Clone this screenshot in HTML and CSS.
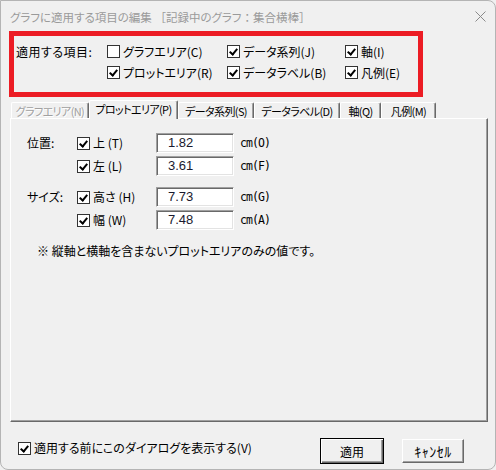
FILE: index.html
```html
<!DOCTYPE html>
<html lang="ja">
<head>
    <meta charset="UTF-8">
    <title>グラフに適用する項目の編集</title>
    <link rel="stylesheet" href="styles.css">
</head>
<body>
    <div class="window">
        <!-- Title bar -->
        <div class="titlebar">
            <span class="title">グラフに適用する項目の編集 <span class="wide">［</span>記録中のグラフ<span class="wide">：</span>集合横棒<span class="wide">］</span></span>
            <svg class="close" width="11" height="11" viewBox="0 0 11 11">
                <path d="M0.5 0.5 L10.5 10.5 M10.5 0.5 L0.5 10.5" stroke="#8a8a8a" stroke-width="1" fill="none"/>
            </svg>
        </div>

        <!-- Items to apply -->
        <div class="apply-group">
            <div class="apply-label">適用する項目:</div>
            <div class="check"><span class="box"></span>グラフエリア(C)</div>
            <div class="check"><span class="box on"></span>データ系列(J)</div>
            <div class="check"><span class="box on"></span>軸(I)</div>
            <div class="check first-col"><span class="box on"></span>プロットエリア(R)</div>
            <div class="check"><span class="box on"></span>データラベル(B)</div>
            <div class="check"><span class="box on"></span>凡例(E)</div>
        </div>

        <!-- Tabs -->
        <div class="tabs">
            <div class="tab disabled" style="width: 78px;">グラフエリア(N)</div>
            <div class="tab active" style="width: 89px;">プロットエリア(P)</div>
            <div class="tab" style="width: 76px;">データ系列(S)</div>
            <div class="tab" style="width: 86px;">データラベル(D)</div>
            <div class="tab" style="width: 41px;">軸(Q)</div>
            <div class="tab" style="width: 55px;">凡例(M)</div>
        </div>

        <div class="panel">
            <div class="field-group">
                <div class="field-row">
                    <div class="field-label">位置:</div>
                    <div class="field-check"><span class="box on"></span>上 (T)</div>
                    <div class="field-input">1.82</div>
                    <div class="unit">cm(O)</div>
                </div>
                <div class="field-row">
                    <div class="field-label"></div>
                    <div class="field-check"><span class="box on"></span>左 (L)</div>
                    <div class="field-input">3.61</div>
                    <div class="unit">cm(F)</div>
                </div>
            </div>
            <div class="field-group">
                <div class="field-row">
                    <div class="field-label">サイズ:</div>
                    <div class="field-check"><span class="box on"></span>高さ (H)</div>
                    <div class="field-input">7.73</div>
                    <div class="unit">cm(G)</div>
                </div>
                <div class="field-row">
                    <div class="field-label"></div>
                    <div class="field-check"><span class="box on"></span>幅 (W)</div>
                    <div class="field-input">7.48</div>
                    <div class="unit">cm(A)</div>
                </div>
            </div>
            <p class="note">※ 縦軸と横軸を含まないプロットエリアのみの値です。</p>
        </div>

        <!-- Footer -->
        <div class="footer">
            <div class="check footer-check"><span class="box on"></span>適用する前にこのダイアログを表示する(V)</div>
            <button class="btn btn-default">適用</button>
            <button class="btn btn-cancel">ｷｬﾝｾﾙ</button>
        </div>
    </div>
</body>
</html>
```

FILE: styles.css
```css
* {
    margin: 0;
    padding: 0;
    box-sizing: border-box;
}

body {
    width: 496px;
    height: 470px;
    overflow: hidden;
    background: #f0f0f0;
    font-family: "Noto Sans CJK JP", "Liberation Sans", sans-serif;
    font-size: 12px;
    line-height: 14px;
    color: #000;
    font-feature-settings: "palt";
}

/* Window frame */
.window {
    width: 496px;
    height: 470px;
    border: 1px solid #b4b4b4;
    border-radius: 0 8px 8px 8px;
    background: #f0f0f0;
}

.titlebar {
    height: 29px;
    display: flex;
    align-items: center;
    padding: 3px 9px 0 9px;
    color: #9a9a9a;
}

.title {
    flex: 1;
    font-size: 11.5px;
    white-space: nowrap;
}

.title .wide {
    font-feature-settings: normal;
}

.close {
    margin-top: -2px;
}

/* Items to apply (red box) */
.apply-group {
    margin: 1px 0 0 8px;
    width: 414px;
    height: 66px;
    border: 5px solid #ec1c24;
    padding: 5px 0 0 2px;
    display: grid;
    grid-template-columns: 91px 120px 118px auto;
    grid-auto-rows: 21px;
    align-items: center;
}

.apply-label {
    letter-spacing: 0.5px;
}

.first-col {
    grid-column: 2;
}

/* Checkbox */
.check,
.field-check {
    display: flex;
    align-items: center;
    white-space: nowrap;
}

.box {
    position: relative;
    width: 13px;
    height: 13px;
    flex-shrink: 0;
    border: 1px solid #333;
    background: #fff;
    margin-right: 3px;
}

.box.on::after {
    content: "";
    position: absolute;
    left: 3px;
    top: 1px;
    width: 3px;
    height: 6px;
    border: solid #000;
    border-width: 0 2px 2px 0;
    transform: rotate(40deg);
}

/* Tabs */
.tabs {
    position: relative;
    z-index: 1;
    display: flex;
    align-items: flex-end;
    height: 18px;
    margin: 3px 0 0 10px;
}

.tab {
    height: 16px;
    display: flex;
    align-items: center;
    justify-content: center;
    white-space: nowrap;
    font-size: 11px;
    letter-spacing: -0.6px;
    border-top: 1px solid #fff;
    border-left: 1px solid #fff;
    border-right: 1px solid #696969;
    border-radius: 2px 2px 0 0;
    box-shadow: inset -1px 0 #a0a0a0;
    background: #f0f0f0;
}

.tab.active {
    height: 19px;
    margin-bottom: -1px;
    padding-bottom: 2px;
}

.tab.disabled {
    color: #a0a0a0;
    text-shadow: 1px 1px #fff;
}

/* Tab page */
.panel {
    margin-left: 9px;
    width: 478px;
    height: 304px;
    border-top: 1px solid #fff;
    border-left: 1px solid #fff;
    border-right: 1px solid #696969;
    border-bottom: 1px solid #696969;
    box-shadow: inset -1px -1px #a0a0a0;
    padding: 14px 0 0 16px;
}

.field-group + .field-group {
    margin-top: 11px;
}

.field-row {
    display: flex;
    align-items: center;
    height: 20px;
}

.field-row + .field-row {
    margin-top: 3px;
}

.field-label {
    width: 50px;
}

.field-check {
    width: 79px;
}

.field-input {
    width: 78px;
    height: 20px;
    padding: 2px 0 0 11px;
    background: #fff;
    border: 1px solid;
    border-color: #a0a0a0 #fff #fff #a0a0a0;
    box-shadow: inset 1px 1px #696969, inset -1px -1px #e3e3e3;
    color: #1a1a2e;
    font-family: "Liberation Sans", sans-serif;
    font-size: 13px;
}

.unit {
    margin-left: 6px;
    font-family: "DejaVu Sans Mono", monospace;
    font-size: 11.5px;
    letter-spacing: -0.9px;
}

.note {
    margin: 14px 0 0 10px;
}

/* Footer */
.footer {
    display: flex;
    align-items: flex-start;
    margin-top: 16px;
    padding: 0 31px 0 17px;
}

.footer-check {
    flex: 1;
    margin-top: 3px;
}

.btn {
    font-family: inherit;
    font-size: 12px;
    background: #f0f0f0;
    border: 1px solid;
    border-color: #fff #696969 #696969 #fff;
    box-shadow: inset -1px -1px #a0a0a0;
}

.btn-default {
    width: 64px;
    height: 26px;
    border: 1px solid #000;
    box-shadow: inset 1px 1px #fff, inset -1px -1px #696969, inset -2px -2px #a0a0a0;
}

.btn-cancel {
    width: 62px;
    height: 24px;
    margin: 1px 0 0 18px;
    font-size: 14px;
    letter-spacing: 0.5px;
    font-feature-settings: normal;
}
```
